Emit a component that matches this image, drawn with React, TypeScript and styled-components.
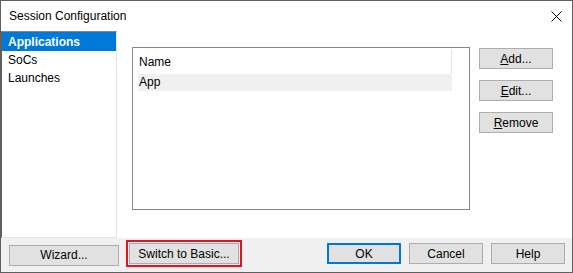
import React from 'react';
import styled, {createGlobalStyle} from 'styled-components';

const GlobalStyle = createGlobalStyle`
  html, body {
    margin: 0;
    padding: 0;
    background: #ffffff;
  }
  * {
    box-sizing: border-box;
  }
`;

const Window = styled.div`
  width: 573px;
  height: 273px;
  border: 1px solid #5f5f5f;
  background: #ffffff;
  display: flex;
  flex-direction: column;
  font-family: "Liberation Sans", Arial, sans-serif;
  font-size: 12px;
  color: #000000;
`;

const TitleBar = styled.div`
  height: 30px;
  display: flex;
  align-items: center;
  justify-content: space-between;
  padding: 0 10px 0 8px;
  font-size: 12px;
`;

const CloseButton = styled.div`
  width: 12px;
  height: 12px;
  display: flex;
  align-items: center;
  justify-content: center;
`;

const Body = styled.div`
  flex: 1;
  display: flex;
  min-height: 0;
`;

const Sidebar = styled.ul`
  list-style: none;
  margin: 0;
  padding: 0;
  width: 116px;
  border-left: 1px solid #5f5f5f;
  border-top: 1px solid #828790;
  border-right: 1px solid #e3e3e3;
  border-bottom: 1px solid #e3e3e3;
`;

const SidebarItem = styled.li<{ $selected?: boolean }>`
  height: ${p => (p.$selected ? 19 : 18)}px;
  line-height: ${p => (p.$selected ? 20 : 19)}px;
  padding-left: 6px;
  background: ${p => (p.$selected ? '#0078d7' : 'transparent')};
  color: ${p => (p.$selected ? '#ffffff' : '#000000')};
  font-weight: ${p => (p.$selected ? 'bold' : 'normal')};
`;

const Main = styled.div`
  flex: 1;
  display: flex;
  gap: 9px;
  padding: 16px 0 0 15px;
`;

const ListBox = styled.div`
  width: 338px;
  height: 163px;
  border: 1px solid #828790;
  padding: 2px 17px 0 5px;
`;

const HeaderRow = styled.div`
  height: 24px;
  line-height: 24px;
  padding-left: 1px;
  border-right: 1px solid #e5e5e5;
`;

const DataRow = styled.div`
  height: 17px;
  line-height: 17px;
  padding-left: 1px;
  background: #f0f0f0;
`;

const SideButtons = styled.div`
  display: flex;
  flex-direction: column;
  gap: 11px;
  padding-top: 1px;
`;

const Button = styled.button<{ $width?: number; $default?: boolean }>`
  width: ${p => p.$width ?? 74}px;
  height: 21px;
  margin: 0;
  padding: 0;
  background: #e1e1e1;
  border: ${p => (p.$default ? '2px solid #0078d7' : '1px solid #adadad')};
  font-family: "Liberation Sans", Arial, sans-serif;
  font-size: 12px;
  color: #000000;
`;

const Key = styled.span`
  text-decoration: underline;
`;

const Footer = styled.div`
  height: 34px;
  background: #f0f0f0;
  display: flex;
  align-items: flex-start;
  padding: 4px 7px 0 8px;
`;

const FooterLeft = styled.div`
  display: flex;
  align-items: center;
  gap: 7px;
  flex: 1;
`;

const FooterRight = styled.div`
  display: flex;
  gap: 8px;
  padding-top: 1px;
`;

const Highlight = styled.div`
  border: 2px solid #e81123;
  padding: 1px;
  background: #f0f0f0;
  margin-top: -2px;
`;

const Spacer = styled.div`
  padding-top: 1px;
`;

export default function App() {
  return (
    <>
      <GlobalStyle/>
      <Window>
        <TitleBar>
          <span>Session Configuration</span>
          <CloseButton>
            <svg width="11" height="11" viewBox="0 0 11 11">
              <path d="M0.5 0.5 L10.5 10.5 M10.5 0.5 L0.5 10.5" stroke="#000" strokeWidth="1" fill="none"/>
            </svg>
          </CloseButton>
        </TitleBar>
        <Body>
          <Sidebar>
            <SidebarItem $selected>Applications</SidebarItem>
            <SidebarItem>SoCs</SidebarItem>
            <SidebarItem>Launches</SidebarItem>
          </Sidebar>
          <Main>
            <ListBox>
              <HeaderRow>Name</HeaderRow>
              <DataRow>App</DataRow>
            </ListBox>
            <SideButtons>
              <Button><Key>A</Key>dd...</Button>
              <Button><Key>E</Key>dit...</Button>
              <Button><Key>R</Key>emove</Button>
            </SideButtons>
          </Main>
        </Body>
        <Footer>
          <FooterLeft>
            <Spacer>
              <Button $width={110}>Wizard...</Button>
            </Spacer>
            <Highlight>
              <Button $width={110}>Switch to Basic...</Button>
            </Highlight>
          </FooterLeft>
          <FooterRight>
            <Button $default>OK</Button>
            <Button>Cancel</Button>
            <Button>Help</Button>
          </FooterRight>
        </Footer>
      </Window>
    </>
  );
}
